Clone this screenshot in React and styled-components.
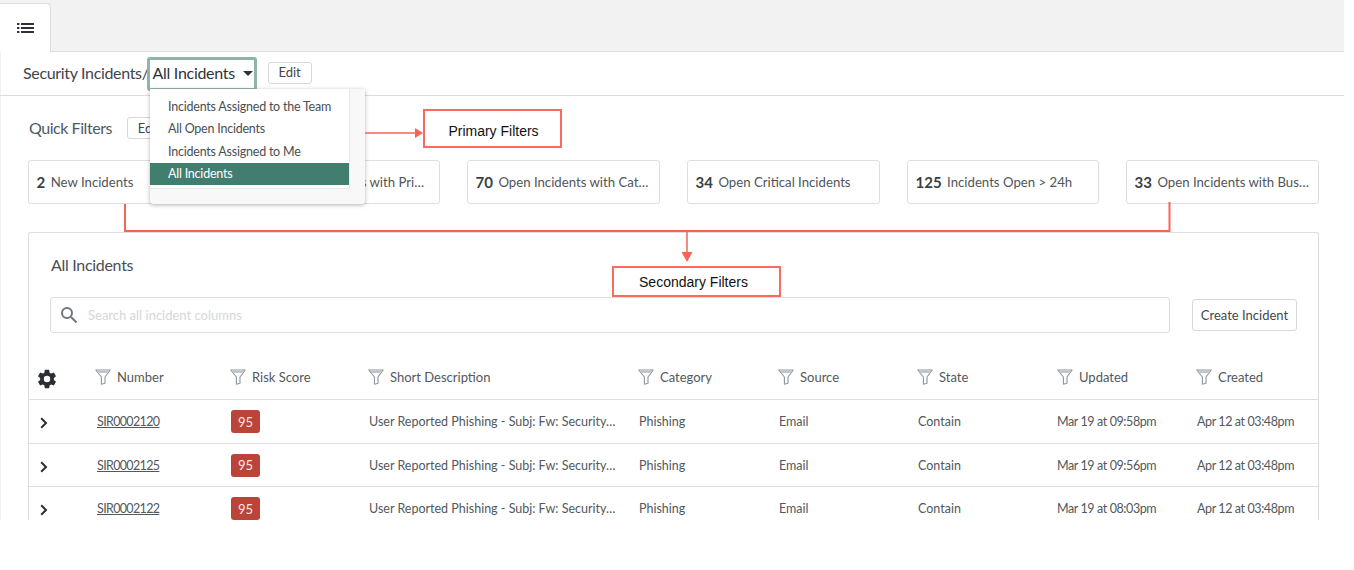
import React from "react";
import styled, { createGlobalStyle } from "styled-components";

const Global = createGlobalStyle`
  html, body { margin: 0; padding: 0; background: #fff; }
  body { font-family: "Lato", "Noto Sans", sans-serif; color: #4a4f54; }
  * { box-sizing: border-box; }
`;

const Page = styled.div`
  position: relative;
  width: 1354px;
  height: 570px;
  overflow: hidden;
  background: #fff;
`;
const Shot = styled.div`
  width: 1344px;
  height: 520px;
  overflow: hidden;
`;
const TabBar = styled.div`
  height: 52px;
  background: #f2f2f2;
  border-bottom: 1px solid #dcdcdc;
  padding-top: 3px;
`;
const Tab = styled.div`
  width: 51px;
  height: 49px;
  background: #fff;
  border: 1px solid #dcdcdc;
  border-bottom: 0;
  border-left: 0;
  border-radius: 0 4px 0 0;
  display: flex;
  align-items: center;
  justify-content: center;
  color: #2e3238;
`;
const Body = styled.div`
  box-shadow: inset 1px 0 #f1f1f1;
`;
const Header = styled.div`
  height: 44px;
  display: flex;
  align-items: center;
  padding-left: 23px;
  border-bottom: 1px solid #dcdcdc;
`;
const Crumb = styled.span`
  font-size: 16px;
  letter-spacing: -0.33px;
  color: #3f454b;
  white-space: nowrap;
  margin-top: -2px;
`;
const Select = styled.div`
  flex: none;
  width: 110px;
  height: 34px;
  margin-left: -2px;
  border: 3px solid #8fb5aa;
  border-radius: 3px;
  display: flex;
  align-items: center;
  padding: 0 0 2px 3px;
  font-size: 16px;
  letter-spacing: -0.3px;
  color: #2e3338;
  white-space: nowrap;
  gap: 8px;
`;
const Caret = styled.span`
  flex: none;
  width: 0;
  height: 0;
  margin-top: 2px;
  border-left: 5px solid transparent;
  border-right: 5px solid transparent;
  border-top: 5px solid #2e3238;
`;
const Btn = styled.div`
  flex: none;
  display: inline-flex;
  align-items: center;
  justify-content: center;
  padding-bottom: 1px;
  background: #fff;
  border: 1px solid #d6d8da;
  border-radius: 3px;
  color: #42474c;
  font-size: 13px;
  width: ${p => p.$w}px;
  height: ${p => p.$h}px;
`;
const EditBtn = styled(Btn)`
  margin: -2px 0 0 11px;
`;
const QuickRow = styled.div`
  display: flex;
  align-items: center;
  padding-left: 29px;
  height: 64px;
`;
const QuickTitle = styled.span`
  font-size: 16px;
  letter-spacing: -0.45px;
  color: #4d5a66;
  margin: -2px 15px 0 0;
`;
const Cards = styled.div`
  display: flex;
  gap: 27px;
  padding: 0 0 0 28px;
`;
const Card = styled.div`
  width: ${p => p.$w}px;
  height: 44px;
  flex: none;
  border: 1px solid #dcdee0;
  border-radius: 3px;
  display: flex;
  align-items: center;
  padding: 0 9px 0 7.5px;
  gap: 5.5px;
  font-size: 13.2px;
  color: #50555a;
  background: #fff;
`;
const Count = styled.b`
  font-size: 15px;
  font-weight: 700;
  color: #3a3f44;
`;
const Ellipsis = styled.span`
  flex: 1;
  min-width: 0;
  white-space: nowrap;
  overflow: hidden;
  text-overflow: ellipsis;
`;
const Panel = styled.div`
  margin: 28px 0 0 28px;
  width: 1291px;
  height: 300px;
  border: 1px solid #dcdee0;
  border-radius: 3px 3px 0 0;
  border-bottom: 0;
  overflow: hidden;
`;
const PanelTitle = styled.div`
  font-size: 16px;
  letter-spacing: -0.3px;
  color: #4a4f54;
  padding: 22px 0 0 22px;
  height: 64px;
`;
const SearchRow = styled.div`
  display: flex;
  align-items: center;
  padding-left: 21px;
  gap: 22px;
`;
const Search = styled.div`
  width: 1120px;
  height: 36px;
  border: 1px solid #dcdee0;
  border-radius: 3px;
  display: flex;
  align-items: center;
  padding-left: 9px;
  gap: 10px;
  font-size: 13px;
  color: #d5d7d9;
`;
const Row = styled.div`
  display: grid;
  grid-template-columns: 66px 135px 138px 270px 140px 139px 140px 139px 1fr;
  align-items: center;
  height: ${p => p.$h}px;
  border-bottom: 1px solid #dcdee0;
  font-size: 12.5px;
  color: #53585d;
`;
const HeadRow = styled(Row)`
  margin-top: 27px;
  font-size: 13px;
  padding-bottom: 6px;
`;
const HeadCell = styled.div`
  display: flex;
  align-items: center;
  gap: 6px;
`;
const GearCell = styled.div`
  display: flex;
  align-items: center;
  padding: 5px 0 0 7px;
  color: #2b2f33;
`;
const ChevronCell = styled.div`
  display: flex;
  align-items: center;
  padding: 3px 0 0 11px;
  color: #2b2f33;
`;
const Link = styled.span`
  text-decoration: underline;
  letter-spacing: -0.65px;
  padding-left: 1px;
`;
const Score = styled.span`
  display: inline-flex;
  align-items: center;
  justify-content: center;
  width: 29px;
  height: 23px;
  background: #bb4439;
  border-radius: 3px;
  color: #fbe9e7;
  font-size: 13px;
`;
const Cell = styled.div`
  white-space: nowrap;
  overflow: hidden;
  text-overflow: ellipsis;
  padding-left: 1px;
`;
const DescCell = styled(Cell)`
  padding-right: 22px;
`;
const DateCell = styled(Cell)`
  padding-left: ${p => p.$pl}px;
  letter-spacing: -0.4px;
`;

const Menu = styled.div`
  position: absolute;
  left: 150px;
  top: 89px;
  width: 215px;
  height: 115px;
  background: #f8f8f8;
  box-shadow: 0 1px 4px rgba(0, 0, 0, 0.3);
  border-radius: 0 0 3px 3px;
`;
const MenuList = styled.div`
  width: 200px;
  height: 100px;
  background: #fff;
  border: 1px solid #e8e8e8;
  border-top: 0;
  border-left: 0;
  padding-top: 6px;
`;
const MenuItem = styled.div`
  height: 22.5px;
  display: flex;
  align-items: center;
  padding-left: 18px;
  font-size: 12.5px;
  letter-spacing: -0.22px;
  color: ${p => (p.$active ? "#fff" : "#4a4f54")};
  background: ${p => (p.$active ? "#417e70" : "transparent")};
`;
const Note = styled.div`
  position: absolute;
  left: ${p => p.$x}px;
  top: ${p => p.$y}px;
  width: ${p => p.$w}px;
  height: ${p => p.$h}px;
  padding: ${p => p.$pad};
  border: 2px solid #fb6a60;
  background: #fff;
  color: #111;
  font-family: "Liberation Sans", Arial, sans-serif;
  font-size: 14px;
  display: flex;
  align-items: center;
  justify-content: center;
`;
const Overlay = styled.svg`
  position: absolute;
  left: 0;
  top: 0;
  pointer-events: none;
`;

const ListIcon = () => (
  <svg width="17" height="10" viewBox="0 0 17 10" fill="currentColor">
    <rect x="0" y="0" width="2.4" height="2" />
    <rect x="4" y="0" width="13" height="2" />
    <rect x="0" y="4" width="2.4" height="2" />
    <rect x="4" y="4" width="13" height="2" />
    <rect x="0" y="8" width="2.4" height="2" />
    <rect x="4" y="8" width="13" height="2" />
  </svg>
);
const Funnel = () => (
  <svg width="16" height="16" viewBox="0 0 16 16" fill="none">
    <path d="M0.8 1h14.4L10 8v6.2l-3.6 1V8z" fill="#fff" stroke="#8f969c" strokeWidth="1.1" strokeLinejoin="round" />
    <path d="M2 1.8h12l-2 2.2H4z" fill="#bfc4c8" />
  </svg>
);
const Gear = () => (
  <svg width="22" height="22" viewBox="0 0 24 24" fill="currentColor">
    <path d="M19.43 12.98c.04-.32.07-.64.07-.98s-.03-.66-.07-.98l2.11-1.65c.19-.15.24-.42.12-.64l-2-3.46c-.12-.22-.39-.3-.61-.22l-2.49 1c-.52-.4-1.08-.73-1.69-.98l-.38-2.65A.49.49 0 0 0 14 2h-4c-.25 0-.46.18-.49.42l-.38 2.65c-.61.25-1.17.59-1.69.98l-2.49-1a.5.5 0 0 0-.61.22l-2 3.46c-.13.22-.07.49.12.64l2.11 1.65c-.04.32-.07.65-.07.98s.03.66.07.98l-2.11 1.65c-.19.15-.24.42-.12.64l2 3.46c.12.22.39.3.61.22l2.49-1c.52.4 1.08.73 1.69.98l.38 2.65c.03.24.24.42.49.42h4c.25 0 .46-.18.49-.42l.38-2.65c.61-.25 1.17-.59 1.69-.98l2.49 1c.23.09.49 0 .61-.22l2-3.46c.12-.22.07-.49-.12-.64zM12 15.5a3.5 3.5 0 1 1 0-7 3.5 3.5 0 0 1 0 7z" />
  </svg>
);
const Chevron = () => (
  <svg width="8" height="12" viewBox="0 0 8 12" fill="none" stroke="currentColor" strokeWidth="2">
    <path d="M1.2 1.2 6 6l-4.8 4.8" />
  </svg>
);
const SearchIcon = () => (
  <svg width="18" height="18" viewBox="0 0 18 18" fill="none" stroke="#70767c" strokeWidth="2">
    <circle cx="7" cy="7" r="5" />
    <path d="M11 11l5.500 5.500" />
  </svg>
);

const cards = [
  [2, "New Incidents", 192],
  [12, "Open Incidents with Priority", 193],
  [70, "Open Incidents with Category", 193],
  [34, "Open Critical Incidents", 193],
  [125, "Incidents Open > 24h", 192],
  [33, "Open Incidents with Business Impact", 193],
];
const heads = ["Number", "Risk Score", "Short Description", "Category", "Source", "State", "Updated", "Created"];
const rows = [
  ["SIR0002120", "Mar 19 at 09:58pm", 44],
  ["SIR0002125", "Mar 19 at 09:56pm", 43],
  ["SIR0002122", "Mar 19 at 08:03pm", 44],
];

export default function App() {
  return (
    <Page>
      <Global />
      <Shot>
        <TabBar>
          <Tab><ListIcon /></Tab>
        </TabBar>
        <Body>
          <Header>
            <Crumb>Security Incidents/</Crumb>
            <Select>All Incidents <Caret /></Select>
            <EditBtn $w={44} $h={22}>Edit</EditBtn>
          </Header>
          <QuickRow>
            <QuickTitle>Quick Filters</QuickTitle>
            <Btn $w={44} $h={22}>Edit</Btn>
          </QuickRow>
          <Cards>
            {cards.map(([n, t, w]) => (
              <Card key={t} $w={w}><Count>{n}</Count><Ellipsis>{t}</Ellipsis></Card>
            ))}
          </Cards>
          <Panel>
            <PanelTitle>All Incidents</PanelTitle>
            <SearchRow>
              <Search><SearchIcon />Search all incident columns</Search>
              <Btn $w={105} $h={32}>Create Incident</Btn>
            </SearchRow>
            <HeadRow $h={40}>
              <GearCell><Gear /></GearCell>
              {heads.map((h) => (
                <HeadCell key={h}><Funnel />{h}</HeadCell>
              ))}
            </HeadRow>
            {rows.map(([id, upd, h]) => (
              <Row key={id} $h={h}>
                <ChevronCell><Chevron /></ChevronCell>
                <Cell><Link>{id}</Link></Cell>
                <Cell><Score>95</Score></Cell>
                <DescCell>User Reported Phishing - Subj: Fw: Security Alert Notice</DescCell>
                <Cell>Phishing</Cell>
                <Cell>Email</Cell>
                <Cell>Contain</Cell>
                <DateCell $pl={0}>{upd}</DateCell>
                <DateCell $pl={1}>Apr 12 at 03:48pm</DateCell>
              </Row>
            ))}
          </Panel>
        </Body>
      </Shot>
      <Menu>
        <MenuList>
          <MenuItem>Incidents Assigned to the Team</MenuItem>
          <MenuItem>All Open Incidents</MenuItem>
          <MenuItem>Incidents Assigned to Me</MenuItem>
          <MenuItem $active>All Incidents</MenuItem>
        </MenuList>
      </Menu>
      <Overlay width="1354" height="570" viewBox="0 0 1354 570">
        <path d="M365 133H417" stroke="#fa6258" strokeWidth="1.5" />
        <path d="M415 128l8 5-8 5z" fill="#fa6258" />
        <path d="M125 204V231H1169.500V202" fill="none" stroke="#fa6258" strokeWidth="2" />
        <path d="M687 232V256" stroke="#fa6258" strokeWidth="1.5" />
        <path d="M681.500 252h11l-5.500 10z" fill="#fa6258" />
      </Overlay>
      <Note $x={423} $y={109} $w={139} $h={39} $pad="4px 0 0 2px">Primary Filters</Note>
      <Note $x={612} $y={266} $w={169} $h={31} $pad="0 6px 0 0">Secondary Filters</Note>
    </Page>
  );
}
